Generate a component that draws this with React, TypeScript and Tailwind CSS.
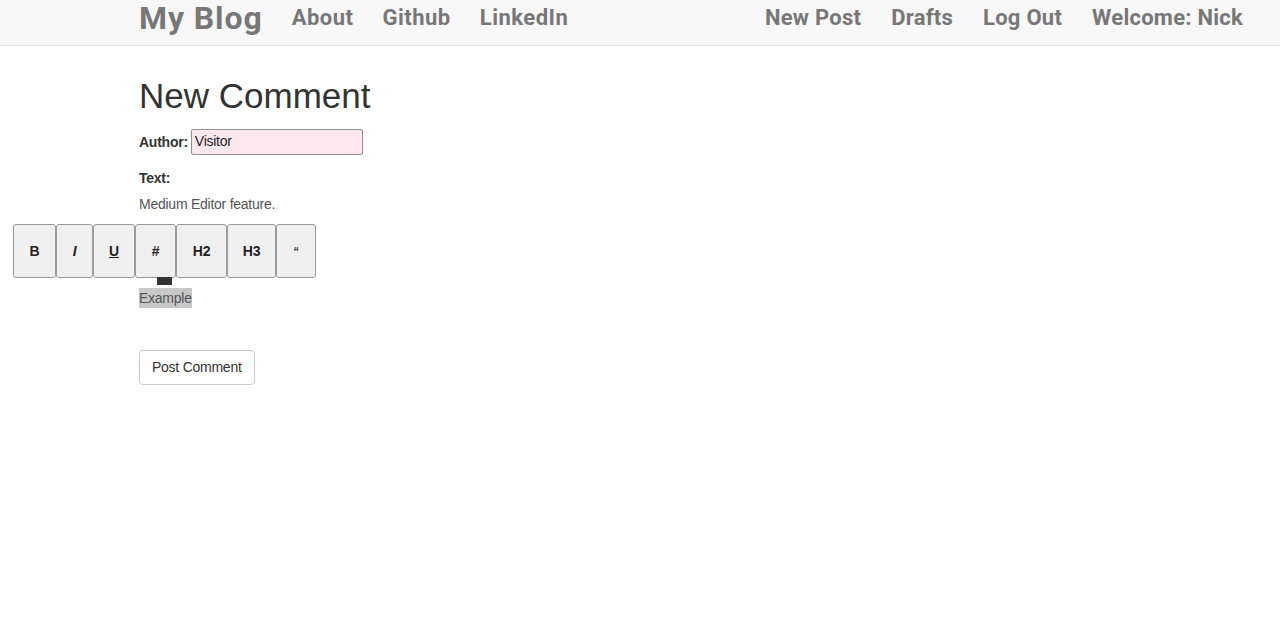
import React from "react";

const navFont = { fontFamily: "Roboto, 'DejaVu Sans', sans-serif" };

function Toolbar() {
  const btns: { label: React.ReactNode; w: number }[] = [
    { label: <span className="font-bold">B</span>, w: 43 },
    { label: <span className="font-bold italic">I</span>, w: 37 },
    { label: <span className="font-bold underline">U</span>, w: 42 },
    { label: <span className="font-bold">#</span>, w: 41 },
    { label: <span className="font-bold">H2</span>, w: 51 },
    { label: <span className="font-bold">H3</span>, w: 49 },
    { label: <span className="font-bold text-[11px]">“</span>, w: 40 },
  ];
  return (
    <div className="absolute left-[13px] top-[224px] flex">
      {btns.map((b, i) => (
        <div
          key={i}
          style={{ width: b.w }}
          className="h-[54px] flex items-center justify-center bg-[#f0f0f0] border border-[#9a9a9a] rounded-[3px] text-[14px] text-[#222]"
        >
          {b.label}
        </div>
      ))}
      <div className="absolute left-[144px] top-[53px] w-[15px] h-[8px] bg-[#333]" />
    </div>
  );
}

export default function App() {
  return (
    <div
      className="relative min-h-[630px] bg-white text-[#333] text-[14px] tracking-[-0.25px]"
      style={{ fontFamily: "'Liberation Sans', Arial, sans-serif" }}
    >
      <nav className="h-[46px] bg-[#f8f8f8] border-b border-[#e7e7e7] flex items-start pl-[139px] pr-[37px] text-[#777]" style={navFont}>
        <div className="flex items-center gap-[29px] h-[36px] tracking-[0.5px]">
          <span className="text-[32px] font-bold leading-none tracking-[0.9px]">My Blog</span>
          <span className="text-[22px] font-bold leading-none">About</span>
          <span className="text-[22px] font-bold leading-none">Github</span>
          <span className="text-[22px] font-bold leading-none">LinkedIn</span>
        </div>
        <div className="ml-auto flex items-center gap-[30px] h-[36px] tracking-[0.25px]">
          <span className="text-[22px] font-bold leading-none">New Post</span>
          <span className="text-[22px] font-bold leading-none">Drafts</span>
          <span className="text-[22px] font-bold leading-none">Log Out</span>
          <span className="text-[22px] font-bold leading-none">Welcome: Nick</span>
        </div>
      </nav>

      <main className="pl-[139px]">
        <h1 className="mt-[31px] text-[35px] leading-[1.1] font-normal text-[#333] tracking-normal">New Comment</h1>
        <div className="mt-[13px] flex items-center h-[26px]">
          <label className="font-bold leading-[20px]">Author:</label>
          <div className="ml-[3px] w-[172px] h-[26px] bg-[#fde8ef] border border-[#8f8f8f] rounded-[2px] flex items-center px-[3px] text-[14px] text-[#222]">
            Visitor
          </div>
        </div>
        <div className="mt-[13px] font-bold leading-[20px]">Text:</div>
        <p className="mt-[6px] leading-[20px] text-[#555]">Medium Editor feature.</p>
        <div className="mt-[74px] h-[20px] text-[#555]">
          <span className="inline-block leading-[20px] bg-[#c8c8c8]">Example</span>
        </div>
        <button className="mt-[42px] h-[35px] px-[12px] border border-[#ccc] rounded-[4px] bg-white text-[14px] text-[#333]">
          Post Comment
        </button>
      </main>

      <Toolbar />
    </div>
  );
}
